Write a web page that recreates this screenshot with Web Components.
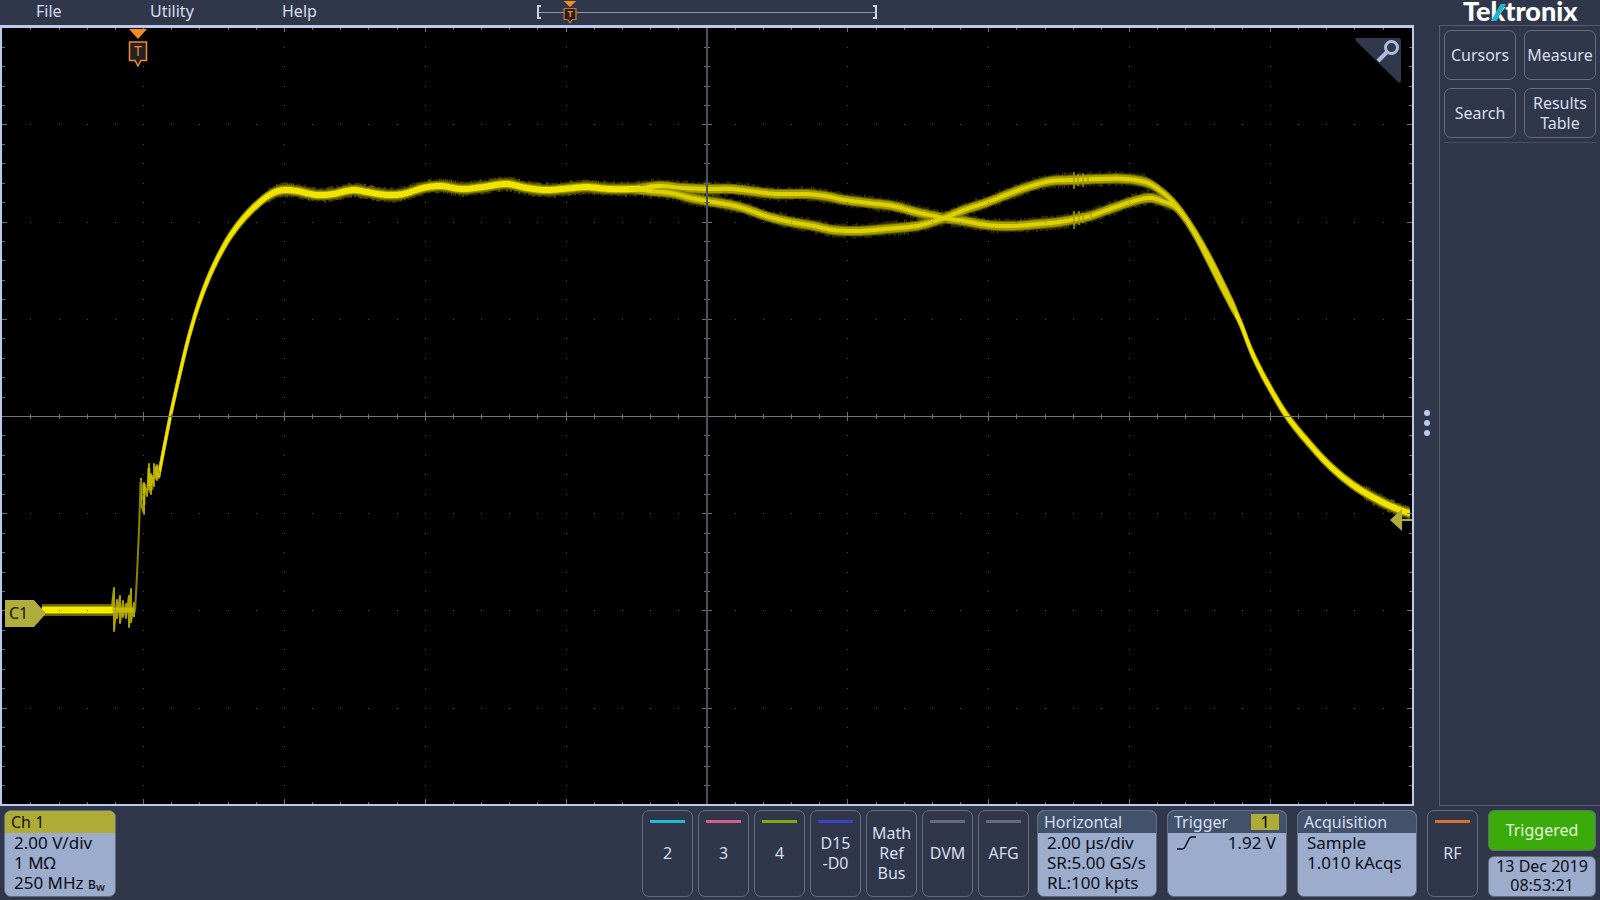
<!DOCTYPE html>
<html lang="en">
<head>
<meta charset="utf-8">
<title>Tektronix Oscilloscope</title>
<style>
  html { background: #31374a; }
  body {
    margin: 0;
    font-family: "Noto Sans", "Open Sans", sans-serif;
    font-size: 16px;
    line-height: 20px;
    color: #d6def2;
    --bg: #31374a;
    --edge: #bccaee;
    --line: #656b7b;
    --panel: #9caccd;
    --panel-head: #43526b;
    --ch1: #aeab37;
  }
</style>
</head>
<body>
<scope-app></scope-app>

<script>
function define(name, html, init) {
  const tpl = document.createElement('template');
  tpl.innerHTML = html;
  customElements.define(name, class extends HTMLElement {
    connectedCallback() {
      if (this.shadowRoot) return;
      this.attachShadow({ mode: 'open' }).append(tpl.content.cloneNode(true));
      if (init) init.call(this, this.shadowRoot);
    }
  });
}

/* Outlined push button, optional coloured bar on top */
define('scope-button', `
  <style>
    :host { display: block; }
    button {
      box-sizing: border-box; width: 100%; height: 100%; margin: 0; padding: 0 0 var(--foot, 0);
      position: relative; display: flex; align-items: center; justify-content: center;
      font: inherit; color: inherit; background: none; text-align: center;
      border: 1px solid var(--line); border-radius: 7px; white-space: nowrap;
    }
    i { display: none; }
    :host([bar]) i {
      display: block; position: absolute; top: 9px; left: 7px; right: 7px; height: 3px;
      background: var(--bar);
    }
  </style>
  <button type="button"><i></i><span><slot></slot></span></button>`,
  function () {
    if (this.hasAttribute('bar')) this.style.setProperty('--bar', this.getAttribute('bar'));
  });

/* Settings badge with a coloured title strip */
define('scope-badge', `
  <style>
    :host {
      display: flex; flex-direction: column; box-sizing: border-box;
      border: 1px solid var(--line); border-radius: 7px; overflow: hidden;
      background: var(--panel); color: #0a0d14; font-size: 17px;
    }
    h2 {
      margin: 0; padding: 0 7px 0 6px; font: inherit; font-size: 16px; line-height: 22px;
      display: flex; align-items: center; justify-content: space-between;
      background: var(--panel-head); color: #d6def2;
    }
    :host([channel]) h2 { background: var(--ch1); color: #14150a; }
    div { padding: 0 9px; white-space: nowrap; }
  </style>
  <h2><slot name="title"></slot><slot name="tag"></slot></h2>
  <div><slot></slot></div>`);

define('trigger-marker', `
  <style>
    :host { display: block; width: 20px; height: 39px; position: relative; color: #ee8a2c; }
    svg { display: block; width: 100%; height: 100%; }
    span {
      position: absolute; left: 0; right: 0; top: 12px; text-align: center;
      font-size: 14px; line-height: 20px;
    }
    :host([small]) { width: 14px; height: 23px; }
    :host([small]) span { top: 7px; font-size: 9px; line-height: 12px; font-weight: bold; }
  </style>
  <svg viewBox="0 0 20 39" preserveAspectRatio="none" aria-hidden="true">
    <path d="M1 0H19L10 10Z" fill="#f68b1f"/>
    <path d="M1.5 13H18.500V31.500H13L10 37L7 31.500H1.500Z" fill="#262021" stroke="#ee8a2c" stroke-width="1.500"/>
  </svg><span>T</span>`);

define('scope-logo', `
  <style>
    :host { display: block; position: relative; width: 114px; color: #fff;
      font: 900 27px/22px Lato, sans-serif; white-space: nowrap; }
    svg { position: absolute; left: 28px; top: 4px; width: 15px; height: 17px; }
  </style>
  <span>Tektronix</span>
  <svg viewBox="0 0 15 17" aria-hidden="true"><path d="M9.500 0H15L5.500 17H0Z" fill="#1fb4d6"/></svg>`);

define('scope-menu', `
  <style>
    :host { display: flex; height: 25px; align-items: flex-start; }
    nav { display: grid; grid-template-columns: 114px 132px auto; padding-left: 36px; flex: 0 0 537px; box-sizing: border-box; }
    a { color: inherit; text-decoration: none; line-height: 23px; }
    .record { position: relative; width: 340px; height: 25px; }
    svg { display: block; width: 100%; height: 100%; }
    trigger-marker { position: absolute; left: 26px; top: 1px; }
    scope-logo { margin-left: auto; margin-right: 23px; }
  </style>
  <nav><a href="#file">File</a><a href="#utility">Utility</a><a href="#help">Help</a></nav>
  <div class="record">
    <svg viewBox="0 0 340 25" fill="none" stroke="#c9d3ec" aria-hidden="true">
      <path d="M1 12.500H339" stroke="#8e96ab"/>
      <path d="M4 6H1V18H4M336 6H339V18H336" stroke-width="2"/>
    </svg>
    <trigger-marker small></trigger-marker>
  </div>
  <scope-logo></scope-logo>`);

define('scope-graticule', `
  <style>
    :host { display: block; position: absolute; inset: 0; }
    svg { display: block; width: 100%; height: 100%; }
  </style>
  <svg viewBox="2 28 1410 776" preserveAspectRatio="none" shape-rendering="crispEdges" aria-hidden="true">
    <path id="dots" fill="#4d5059"/><path id="ticks" fill="#6b6e79"/>
    <path fill="#72757f" d="M2 416H1412V417H2Z"/>
    <path id="axis" fill="#4e515c" d="M706 28H708V804H706Z"/>
  </svg>`,
  function (root) {
    let dots = '', ticks = '';
    const box = (x, y, w, h) => `M${x} ${y}h${w}v${h}h${-w}z`;
    for (let i = -24; i <= 24; i++) {
      const x = Math.round(706.500 + i * 28.170), major = i % 5 === 0;
      for (let r = -3; r <= 3; r++) if (r) dots += box(x, Math.round(416 + r * 97.200), 1, 1);
      const t = major ? 4 : 2;
      ticks += box(x, 416 - t, 1, 2 * t + 1) + box(x, 28, 1, major ? 4 : 2) + box(x, major ? 799 : 802, 1, major ? 5 : 2);
    }
    for (let j = -19; j <= 19; j++) {
      const y = Math.round(416 + j * 19.440), major = j % 5 === 0;
      for (let c = -4; c <= 4; c++) if (c) dots += box(Math.round(706.500 + c * 140.850), y, 1, 1);
      const t = major ? 5 : 3;
      ticks += box(707 - t, y, 2 * t, 1) + box(2, y, t, 1) + box(1412 - t, y, t, 1);
    }
    root.getElementById('dots').setAttribute('d', dots);
    root.getElementById('ticks').setAttribute('d', ticks);
  });

/* Channel 1 persistence trace */
define('scope-trace', `
  <style>
    :host { display: block; position: absolute; inset: 0; }
    svg { display: block; width: 100%; height: 100%; }
  </style>
  <svg viewBox="2 28 1410 776" preserveAspectRatio="none" role="img" aria-label="Channel 1 waveform">
    <g id="fuzz" fill="none" stroke="#c8be00"></g>
    <g id="glow"></g>
    <g id="core"></g>
    <path d="M42 610H113" stroke="#6a6400" stroke-width="12"/>
    <path d="M42 610H113" stroke="#f6ea00" stroke-width="7"/>
    <g fill="none" stroke="#a9a000" stroke-width="2" stroke-linejoin="round">
      <path d="M112 606L114 588V631L117 600V618L120 596V623L123 601V617L126 604V618L129 596V627L131 589V622L134 603V617"/>
      <path d="M141 478V503L144 514V483L147 496L149 464V488L151 494V474L154 486V464L157 480V465L160 476"/>
      <path d="M112 610H135" stroke="#d5ca00" stroke-width="5" opacity=".6"/>
      <path d="M141 482V500M144 484V505M149 468V486M152 475V490M156 466V478L159 473" stroke="#d5ca00" stroke-width="3" opacity=".6"/>
      <path d="M135 612L137 575L139 530L140 500L141 480" stroke="#8c8500" stroke-width="2"/>
      <path d="M1074 172V189M1078 174V186M1083 173V187M1088 175V184M1074 211V229M1079 211V225M1083 213V223M1091 212V219" opacity=".7"/>
    </g>
  </svg>`,
  function (root) {
    const rise = [[159,474],[165,443],[171,413],[180,373],[188,340],[199,303],[212,270],[227,241],[243,219],[260,202],[273,193],[284,190],[297,191],[317,195],[333,194],[353,190],[367,192],[387,195],[403,194],[423,188],[440,186],[463,189],[483,187],[507,184],[527,188],[547,190],[573,188],[587,187],[610,189],[632,189]];
    const a = [[659,186],[683,188],[707,189],[731,189],[758,192],[778,194],[806,194],[825,196],[845,200],[869,203],[893,206],[916,212],[944,218],[964,221],[988,225],[1011,226],[1039,224],[1059,222],[1076,219],[1090,216],[1110,209],[1134,201],[1150,198],[1162,201],[1174,206],[1183,216],[1195,235],[1208,260],[1220,284],[1232,307]];
    const b = [[651,191],[671,193],[691,198],[707,201],[731,205],[746,209],[766,216],[786,221],[814,226],[833,230],[857,231],[885,229],[916,226],[932,222],[944,218],[964,210],[988,202],[1011,193],[1031,186],[1051,181],[1074,180],[1098,179],[1126,179],[1148,183],[1162,192],[1174,203],[1185,217],[1198,237],[1212,262],[1223,284],[1234,307]];
    const fall = [[1240,322],[1253,355],[1270,388],[1287,416],[1307,441],[1330,466],[1353,485],[1380,501],[1400,510],[1409,513]];

    // smooth sampling of the knots (Hermite, finite-difference tangents)
    function sample(p) {
      const out = [];
      for (let i = 0; i < p.length - 1; i++) {
        const p0 = p[Math.max(0, i - 1)], p1 = p[i], p2 = p[i + 1], p3 = p[Math.min(p.length - 1, i + 2)];
        const n = Math.ceil((p2[0] - p1[0]) / 2);
        const m1 = (p2[1] - p0[1]) / (p2[0] - p0[0]), m2 = (p3[1] - p1[1]) / (p3[0] - p1[0]), h = p2[0] - p1[0];
        for (let k = 0; k < n; k++) {
          const t = k / n, t2 = t * t, t3 = t2 * t;
          out.push([p1[0] + t * h,
            (2*t3 - 3*t2 + 1) * p1[1] + (t3 - 2*t2 + t) * h * m1 + (3*t2 - 2*t3) * p2[1] + (t3 - t2) * h * m2]);
        }
      }
      out.push(p[p.length - 1]);
      return out;
    }
    const band = (pts, h, fill, sw) => {
      const up = pts.map(q => q[0].toFixed(1) + ' ' + (q[1] - h).toFixed(1));
      const dn = pts.map(q => q[0].toFixed(1) + ' ' + (q[1] + h).toFixed(1)).reverse();
      return `<path d="M${up.join('L')}L${dn.join('L')}Z" fill="${fill}" stroke="${fill}" stroke-width="${sw}" stroke-linejoin="round"/>`;
    };
    let seed = 7;
    const rnd = () => (seed = (seed * 16807) % 2147483647) / 2147483647;
    let fuzz = '', glow = '', core = '';
    const runs = [sample([...rise, ...a, ...fall]), sample([...rise, ...b, ...fall])];
    runs.forEach(pts => {
      let light = '', dim = '';
      pts.forEach((q, i) => {
        const n = pts[i + 1] || q, slope = Math.abs((n[1] - q[1]) / ((n[0] - q[0]) || 1));
        if (slope > .6) return;
        const u = 5 + rnd() * 3, d = 5 + rnd() * 3;
        const s = `M${q[0].toFixed(1)} ${(q[1] - u).toFixed(1)}V${(q[1] + d).toFixed(1)}`;
        if (rnd() > .5) light += s; else dim += s;
      });
      fuzz += `<path d="${light}" opacity=".4"/><path d="${dim}" opacity=".25" stroke-width="2"/>`;
      glow += band(pts, 4, '#6f6900', 2) + band(pts, 3, '#a59d00', 2);
    });
    const split = (pts, x0, x1) => pts.filter(q => q[0] >= x0 && q[0] <= x1);
    runs.forEach(pts => {
      core += band(split(pts, 650, 1240), 1, '#ddd200', 2);
    });
    core += band(split(runs[0], 150, 640), 2, '#f0e400', 2) + band(split(runs[0], 630, 662), 1, '#e6db00', 2)
          + band(split(runs[1], 630, 652), 1, '#e6db00', 2) + band(split(runs[0], 1236, 1410), 2, '#f0e400', 2);
    root.getElementById('fuzz').innerHTML = fuzz;
    root.getElementById('glow').innerHTML = glow;
    root.getElementById('core').innerHTML = core;
  });

define('scope-display', `
  <style>
    :host {
      display: block; position: relative; background: #000; min-height: 300px;
      border: 2px solid var(--edge); border-top-width: 3px;
    }
    #marker { position: absolute; left: 9%; top: 1px; margin-left: -1px; }
    .ch { position: absolute; left: 3px; top: 73.700%; width: 41px; height: 27px; color: #14150a; }
    .ch svg { position: absolute; inset: 0; }
    .ch span { position: relative; display: block; padding-left: 4px; line-height: 27px; }
    .level { position: absolute; right: 0; top: 62%; }
    button { position: absolute; top: 10px; right: 11px; width: 46px; height: 45px; padding: 0; border: 0; background: none; }
    svg { display: block; }
  </style>
  <scope-trace></scope-trace>
  <scope-graticule></scope-graticule>
  <trigger-marker id="marker"></trigger-marker>
  <div class="ch">
    <svg width="41" height="27" aria-hidden="true"><path d="M0 0H29L41 13.500L29 27H0Z" fill="#b0ad3a"/></svg>
    <span>C1</span>
  </div>
  <svg class="level" width="22" height="22" aria-hidden="true"><path d="M0 11L12 0V10H22V12H12V22Z" fill="#b0ad3a"/></svg>
  <button type="button" aria-label="Zoom">
    <svg width="46" height="45" aria-hidden="true">
      <path d="M2 0H44Q46 0 46 2V42Q46 46 43 44L1 3Q-1 0 2 0Z" fill="#31384b"/>
      <path d="M32 14L23 23" stroke="#a9bbdf" stroke-width="4"/>
      <circle cx="36.500" cy="9.500" r="6" fill="none" stroke="#a9bbdf" stroke-width="3"/>
    </svg>
  </button>`);

define('scope-sidebar', `
  <style>
    :host { display: block; box-sizing: border-box; border: 1px solid #565b6b; border-right: 0; padding: 4px 4px 0; }
    div { display: grid; grid-template-columns: 1fr 1fr; gap: 8px; grid-auto-rows: 50px; padding-bottom: 4px; border-bottom: 1px solid #4a5062; }
  </style>
  <div>
    <scope-button>Cursors</scope-button><scope-button>Measure</scope-button>
    <scope-button>Search</scope-button><scope-button>Results<br>Table</scope-button>
  </div>`);

define('scope-settings', `
  <style>
    :host { display: flex; gap: 10px; height: 87px; padding: 4px 4px 3px; --foot: 2px; }
    .inputs { display: flex; gap: 5px; margin-left: auto; margin-right: -2px; }
    .inputs scope-button, .rf { width: 51px; }
    .ch1 { width: 112px; }
    .set { width: 120px; }
    .tag { width: 28px; line-height: 16px; text-align: center; background: var(--ch1); color: #000; box-sizing: border-box; }
    .row { display: flex; align-items: center; justify-content: space-between; padding-right: 1px; }
    small { font-size: 12px; line-height: 12px; font-weight: 500; }
    sub { font-size: 11px; line-height: 12px; vertical-align: -2px; font-weight: 500; }
    .status { display: flex; flex-direction: column; gap: 5px; width: 108px; text-align: center; }
    .status > * { box-sizing: border-box; border: 1px solid var(--line); border-radius: 6px; }
    output { display: block; background: #3aab0b; color: #e4f5dc; line-height: 39px; }
    time { display: block; flex: 1; background: var(--panel); color: #0a0d14; line-height: 19px; }
  </style>
  <scope-badge class="ch1" channel><span slot="title">Ch 1</span>2.00 V/div<br>1 MΩ<br>250 MHz <small>B</small><sub>w</sub></scope-badge>
  <div class="inputs">
    <scope-button bar="#21bcd2">2</scope-button>
    <scope-button bar="#d95c8d">3</scope-button>
    <scope-button bar="#84a80f">4</scope-button>
    <scope-button bar="#3d40c8">D15<br>-D0</scope-button>
    <scope-button>Math<br>Ref<br>Bus</scope-button>
    <scope-button bar="#676b76">DVM</scope-button>
    <scope-button bar="#676b76">AFG</scope-button>
  </div>
  <scope-badge class="set"><span slot="title">Horizontal</span>2.00 µs/div<br>SR:5.00 GS/s<br>RL:100 kpts</scope-badge>
  <scope-badge class="set"><span slot="title">Trigger</span><span slot="tag" class="tag">1</span>
    <span class="row"><svg width="20" height="14" aria-hidden="true"><path d="M0 13H5Q7 13 8 11L12 3Q13 1 15 1H19" fill="none" stroke="#0a0d14" stroke-width="1.500"/></svg><span>1.92 V</span></span>
  </scope-badge>
  <scope-badge class="set"><span slot="title">Acquisition</span>Sample<br>1.010 kAcqs</scope-badge>
  <scope-button class="rf" bar="#d8712b">RF</scope-button>
  <div class="status"><output>Triggered</output><time datetime="2019-12-13T08:53:21">13 Dec 2019<br>08:53:21</time></div>`);

define('scope-app', `
  <style>
    :host { display: flex; flex-direction: column; min-height: 100vh; background: var(--bg); }
    main { flex: 1; display: grid; grid-template-columns: minmax(0, 1fr) 25px 161px; }
    .handle { display: flex; flex-direction: column; align-items: center; justify-content: center; gap: 4px; padding: 14px 0 0; border: 0; background: none; }
    .handle i { width: 6px; height: 6px; border-radius: 50%; background: #bccaee; }
  </style>
  <scope-menu></scope-menu>
  <main>
    <scope-display></scope-display>
    <button class="handle" type="button" aria-label="Resize results bar"><i></i><i></i><i></i></button>
    <scope-sidebar></scope-sidebar>
  </main>
  <scope-settings></scope-settings>`);
</script>
</body>
</html>
